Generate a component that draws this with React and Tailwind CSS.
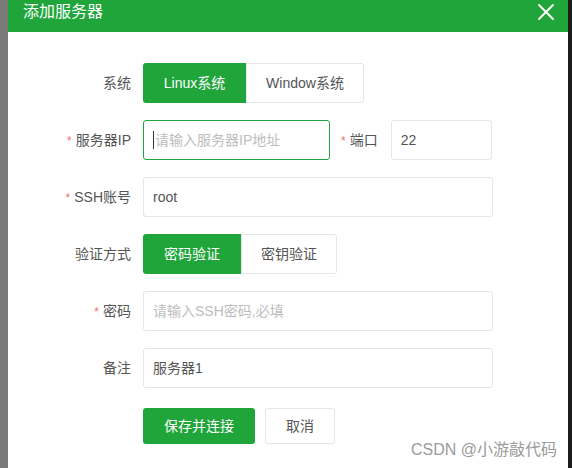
const font = { fontFamily: '"Liberation Sans", "Noto Sans CJK SC", sans-serif' };

const Label = ({ children, required, className = "w-[135px]" }) => (
  <div className={`${className} shrink-0 pr-[12px] text-right text-[14px] text-[#555]`}>
    {required && <span className="mr-[4px] text-[12px] text-[#f07070]">*</span>}
    {children}
  </div>
);

const Input = ({ value, placeholder, focused, className = "w-[350px]" }) => (
  <div
    className={`${className} flex h-[40px] items-center rounded-[3px] border bg-white pl-[9px] text-[14px] ${
      focused ? "border-[#20a53a]" : "border-[#e6e6e6]"
    }`}
  >
    {focused && <span className="mr-[1px] h-[18px] w-px bg-[#333]" />}
    {value ? (
      <span className="text-[#555]">{value}</span>
    ) : (
      <span className="text-[#bdbdbd]">{placeholder}</span>
    )}
  </div>
);

const Toggle = ({ options, active, widths }) => (
  <div className="flex h-[40px]">
    {options.map((opt, i) => (
      <div
        key={opt}
        className={`${widths[i]} flex items-center justify-center text-[14px] ${
          i === 0 ? "rounded-l-[3px]" : "rounded-r-[3px]"
        } ${
          i === active
            ? "bg-[#20a53a] text-white"
            : "border border-[#e6e6e6] bg-white text-[#555]"
        }`}
      >
        {opt}
      </div>
    ))}
  </div>
);

export default function App() {
  return (
    <div className="flex h-[468px] w-[572px] overflow-hidden bg-[#1c1c1c]" style={font}>
      <div className="w-[8px] shrink-0 bg-[#7a7a7a]" />
      <div className="relative flex w-[560px] flex-col bg-white">
        <div className="flex h-[32px] items-start justify-between bg-[#20a53a] pl-[15px] pr-[13px] pt-[2px]">
          <span className="text-[16px] leading-[20px] text-white">添加服务器</span>
          <svg width="18" height="18" viewBox="0 0 18 18" className="mt-[1px]">
            <path d="M2 2L16 16M16 2L2 16" stroke="#fff" strokeWidth="2" strokeLinecap="round" />
          </svg>
        </div>

        <div className="flex flex-col gap-[17px] pt-[31px]">
          <div className="flex items-center">
            <Label>系统</Label>
            <Toggle options={["Linux系统", "Window系统"]} active={0} widths={["w-[103px]", "w-[118px]"]} />
          </div>

          <div className="flex items-center">
            <Label required>服务器IP</Label>
            <Input placeholder="请输入服务器IP地址" focused className="w-[187px]" />
            <div className="shrink-0 pl-[11px] pr-[13px] text-[14px] text-[#555]">
              <span className="mr-[4px] text-[12px] text-[#f07070]">*</span>端口
            </div>
            <Input value="22" className="w-[101px]" />
          </div>

          <div className="flex items-center">
            <Label required>SSH账号</Label>
            <Input value="root" />
          </div>

          <div className="flex items-center">
            <Label>验证方式</Label>
            <Toggle options={["密码验证", "密钥验证"]} active={0} widths={["w-[98px]", "w-[96px]"]} />
          </div>

          <div className="flex items-center">
            <Label required>密码</Label>
            <Input placeholder="请输入SSH密码,必填" />
          </div>

          <div className="flex items-center">
            <Label>备注</Label>
            <Input value="服务器1" />
          </div>

          <div className="mt-[3px] flex items-center gap-[10px] pl-[135px]">
            <div className="flex h-[36px] w-[112px] items-center justify-center rounded-[3px] bg-[#20a53a] text-[14px] text-white">
              保存并连接
            </div>
            <div className="flex h-[36px] w-[70px] items-center justify-center rounded-[3px] border border-[#e6e6e6] bg-white text-[14px] text-[#555]">
              取消
            </div>
          </div>
        </div>

        <div className="absolute bottom-[6px] right-[11px] text-[16px] text-[#9a9a9a]">
          CSDN @小游敲代码
        </div>
      </div>
    </div>
  );
}
